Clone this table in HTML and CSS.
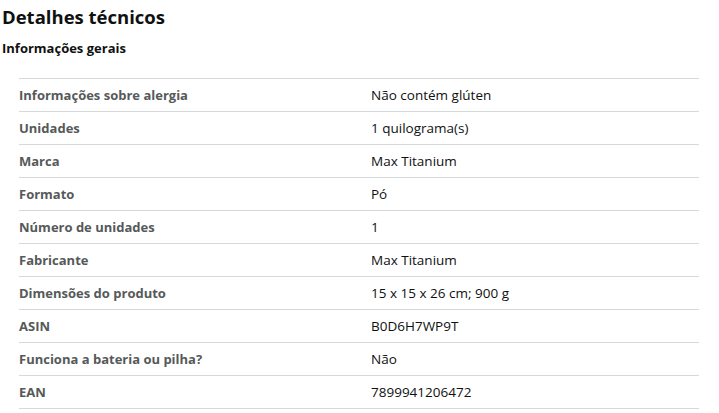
FILE: index.html
```html
<!DOCTYPE html>
<html lang="pt-BR">
<head>
<meta charset="utf-8">
<link rel="stylesheet" href="styles.css">
</head>
<body>
<div class="page">
  <h2 class="title">Detalhes técnicos</h2>
  <h3 class="subtitle">Informações gerais</h3>
  <table class="specs">
    <tr><th>Informações sobre alergia</th><td>Não contém glúten</td></tr>
    <tr><th>Unidades</th><td>1 quilograma(s)</td></tr>
    <tr><th>Marca</th><td>Max Titanium</td></tr>
    <tr><th>Formato</th><td>Pó</td></tr>
    <tr><th>Número de unidades</th><td>1</td></tr>
    <tr><th>Fabricante</th><td>Max Titanium</td></tr>
    <tr><th>Dimensões do produto</th><td>15 x 15 x 26 cm; 900 g</td></tr>
    <tr><th>ASIN</th><td>B0D6H7WP9T</td></tr>
    <tr><th>Funciona a bateria ou pilha?</th><td>Não</td></tr>
    <tr><th>EAN</th><td>7899941206472</td></tr>
  </table>
</div>
</body>
</html>
```

FILE: styles.css
```css
html, body {
  margin: 0;
  padding: 0;
  background: #ffffff;
}
.page {
  padding: 4px 0 0 2px;
  font-family: "Open Sans", "Noto Sans", sans-serif;
  color: #0f1111;
}
.title {
  margin: 0;
  font-size: 18.5px;
  line-height: 26px;
  font-weight: 700;
  color: #0f1111;
}
.subtitle {
  margin: 8px 0 0 0;
  font-size: 13px;
  line-height: 20px;
  font-weight: 700;
  color: #0f1111;
}
.specs {
  margin: 20px 0 0 17px;
  width: 680px;
  border-collapse: collapse;
  border-top: 1px solid #d5d9d9;
}
.specs tr {
  border-bottom: 1px solid #d5d9d9;
}
.specs th,
.specs td {
  height: 32px;
  padding: 0;
  font-size: 13px;
  text-align: left;
  vertical-align: middle;
}
.specs th {
  width: 352px;
  font-weight: 700;
  color: #565959;
}
.specs td {
  font-size: 13.5px;
  color: #0f1111;
}
```
